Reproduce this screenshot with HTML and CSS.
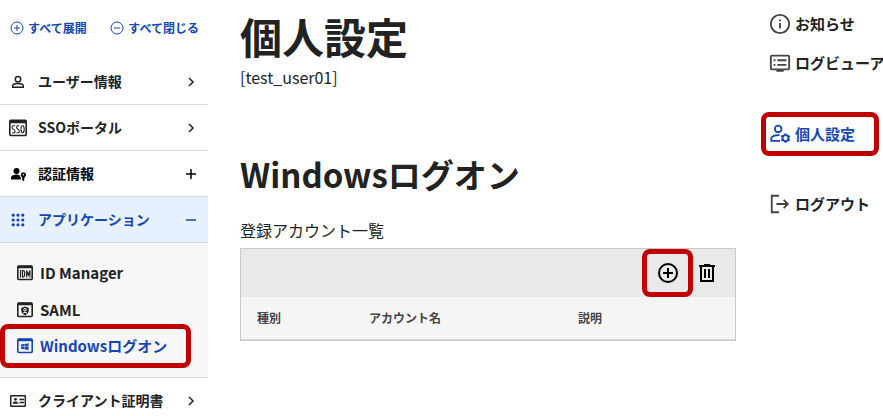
FILE: index.html
```html
<!DOCTYPE html>
<html lang="ja">
<head>
    <meta charset="UTF-8">
    <meta name="viewport" content="width=device-width, initial-scale=1.0">
    <title>個人設定</title>
    <link rel="stylesheet" href="styles.css">
</head>
<body>
    <!-- Left Menu -->
    <nav class="sidebar">
        <div class="toggle-bar">
            <button type="button">
                <svg width="14" height="14" viewBox="0 0 14 14" fill="none" stroke="currentColor"><circle cx="7" cy="7" r="6"/><path d="M4 7h6M7 4v6"/></svg>
                すべて展開
            </button>
            <button type="button">
                <svg width="14" height="14" viewBox="0 0 14 14" fill="none" stroke="currentColor"><circle cx="7" cy="7" r="6"/><path d="M4 7h6"/></svg>
                すべて閉じる
            </button>
        </div>
        <ul class="menu">
            <li>
                <a class="menu-item" href="#">
                    <svg class="icon" viewBox="0 0 20 20" fill="none" stroke="currentColor" stroke-width="1.5"><circle cx="10" cy="7.3" r="2.7"/><path d="M4.7 15.3v-1.2c0-1.7 3-2.5 5.3-2.5s5.3.8 5.3 2.5v1.2z"/></svg>
                    <span>ユーザー情報</span>
                    <svg class="mark" viewBox="0 0 12 12"><path d="M4 2l4 4-4 4"/></svg>
                </a>
            </li>
            <li>
                <a class="menu-item" href="#">
                    <svg class="icon" viewBox="0 0 20 20" fill="none" stroke="currentColor"><rect x="1.8" y="2.3" width="16.4" height="15.2" rx="1" stroke-width="1.6"/><path d="M2 4h16" stroke-width="2.5"/><path d="M7 7.7H5.2Q4 7.7 4 9.2T5.4 11.200 7 13.200 5.6 14.700H4M11.3 7.700H9.7Q8.6 7.700 8.6 9.200T10 11.200t1.4 2T10 14.700H8.5" stroke-width="1.1"/><ellipse cx="14.6" cy="11.2" rx="1.6" ry="3.500" stroke-width="1.1"/></svg>
                    <span>SSOポータル</span>
                    <svg class="mark" viewBox="0 0 12 12"><path d="M4 2l4 4-4 4"/></svg>
                </a>
            </li>
            <li>
                <a class="menu-item strong" href="#">
                    <svg class="icon" viewBox="0 0 20 20" fill="currentColor"><circle cx="8.5" cy="7" r="3"/><path d="M3 15.5V13.7c0-2 3.2-3.2 5.8-3.2l2.6.4c.2 1.3.8 2 1.4 2.4v2.2z"/><path fill-rule="evenodd" d="M15.4 8.2a2.7 2.7 0 0 1 1.2 5.1v1l-.7.8.7.8-1.2 1.3-1.2-1.2v-2.7a2.7 2.7 0 0 1 1.2-5.1zm0 1.7a.8.8 0 1 0 0 1.6.8.8 0 0 0 0-1.6z"/></svg>
                    <span>認証情報</span>
                    <svg class="mark" viewBox="0 0 12 12"><path d="M1 6h10M6 1v10"/></svg>
                </a>
            </li>
            <li>
                <a class="menu-item active" href="#">
                    <svg class="icon" viewBox="0 0 20 20" fill="none" stroke="currentColor" stroke-width="3.2" stroke-linecap="round" stroke-dasharray="0 4.8"><path d="M5.200 5.200h10M5.200 10h10M5.200 14.800h10"/></svg>
                    <span>アプリケーション</span>
                    <svg class="mark" viewBox="0 0 12 12"><path d="M1 6h10"/></svg>
                </a>
                <ul class="submenu">
                    <li>
                        <a href="#">
                            <svg width="18" height="18" viewBox="0 0 18 18" fill="none" stroke="currentColor"><rect x="1.8" y="2" width="14.4" height="13.5" rx="1" stroke-width="1.6"/><path d="M2 3h14" stroke-width="2.5"/><path d="M4.5 6v7.500M6.5 6.500v6.500h.8q1.4 0 1.4-3.200T7.300 6.500zM10.700 13.500V6.500l1.600 4.500 1.600-4.500v7" stroke-width="1.2"/></svg>
                            ID Manager
                        </a>
                    </li>
                    <li>
                        <a href="#">
                            <svg width="18" height="18" viewBox="0 0 18 18" fill="none" stroke="currentColor"><rect x="1.8" y="2" width="14.4" height="13.5" rx="1" stroke-width="1.6"/><path d="M2 3h14" stroke-width="2.5"/><path d="M9 5.500l3.800 1.400v2.600c0 2.200-1.600 3.800-3.800 4.700-2.200-.9-3.800-2.500-3.800-4.700V6.900z" fill="currentColor" stroke="none"/><circle cx="9" cy="8.800" r="1.3" stroke="#f7f7f7"/><path d="M7 12q2-1.500 4 0" stroke="#f7f7f7"/></svg>
                            SAML
                        </a>
                    </li>
                    <li>
                        <a class="current marked" href="#">
                            <svg width="18" height="18" viewBox="0 0 18 18" fill="none" stroke="currentColor"><rect x="1.8" y="2" width="14.4" height="13.5" rx="1" stroke-width="1.6"/><path d="M2 3h14" stroke-width="2.5"/><path d="M5 7.500l3-.5v2.300H5zM8.400 6.900l4.200-.7v3.100H8.400zM5 9.700h3v2.500l-3-.5zM8.400 9.700h4.200V13l-4.200-.7z" fill="currentColor" stroke="none"/></svg>
                            Windowsログオン
                        </a>
                    </li>
                </ul>
            </li>
            <li>
                <a class="menu-item" href="#">
                    <svg class="icon" viewBox="0 0 20 20" fill="none" stroke="currentColor"><rect x="2.7" y="4.700" width="14.6" height="10.6" rx=".5" stroke-width="1.5"/><path d="M11.5 8.500H16M11.5 11.500H16" stroke-width="1.3"/><circle cx="7.500" cy="8.300" r="1.4" fill="currentColor" stroke="none"/><path d="M4.700 12.800v-.7c0-1.100 1.700-1.700 2.800-1.700s2.800.6 2.800 1.700v.7z" fill="currentColor" stroke="none"/></svg>
                    <span>クライアント証明書</span>
                    <svg class="mark" viewBox="0 0 12 12"><path d="M4 2l4 4-4 4"/></svg>
                </a>
            </li>
        </ul>
    </nav>

    <!-- Main Section -->
    <main class="content">
        <h1>個人設定</h1>
        <p class="user">[test_user01]</p>
        <h2>Windowsログオン</h2>
        <p class="list-title" id="accountTitle">登録アカウント一覧</p>
        <div class="account-list">
            <div class="toolbar">
                <button type="button" class="marked" aria-label="追加">
                    <svg width="24" height="24" viewBox="0 0 24 24" fill="none" stroke="currentColor" stroke-width="2"><circle cx="12" cy="12" r="9"/><path d="M7 12h10M12 7v10"/></svg>
                </button>
                <button type="button" aria-label="削除">
                    <svg width="24" height="24" viewBox="0 0 24 24" fill="none" stroke="currentColor" stroke-width="2"><path d="M4 5h16M9 4h6M6 5v15h12V5M10 8v9M14 8v9"/></svg>
                </button>
            </div>
            <table aria-labelledby="accountTitle">
                <thead>
                    <tr>
                        <th scope="col" class="col-type">種別</th>
                        <th scope="col" class="col-name">アカウント名</th>
                        <th scope="col">説明</th>
                    </tr>
                </thead>
            </table>
        </div>
    </main>

    <!-- Right Menu -->
    <nav class="side-links">
        <a href="#">
            <svg viewBox="0 0 24 24" fill="none" stroke="currentColor" stroke-width="2"><circle cx="12" cy="12" r="10"/><path d="M12 11v6M12 7v2"/></svg>
            お知らせ
        </a>
        <a href="#">
            <svg viewBox="0 0 24 24" fill="none" stroke="currentColor" stroke-width="2"><rect x="2" y="4" width="20" height="15" rx="1"/><path d="M8 20.500h8M9 9h10M9 14h10M5 9h2M5 14h2"/></svg>
            ログビューア
        </a>
        <a class="current marked" href="#">
            <svg viewBox="0 0 24 24" fill="none" stroke="currentColor" stroke-width="2"><circle cx="10" cy="6.500" r="3.600"/><path d="M12 19.500H2.500v-2.500c0-2.500 4-4 9-3.800"/><circle cx="18" cy="16.500" r="3.200"/><path d="M18 11.500v2M18 19.500v2M13.500 13.900l1.700 1M20.800 18.100l1.700 1M13.500 19.100l1.700-1M20.800 14.900l1.700-1" stroke-width="2.500"/></svg>
            個人設定
        </a>
        <a class="logout" href="#">
            <svg viewBox="0 0 24 24" fill="none" stroke="currentColor" stroke-width="2"><path d="M11 3H3v18h8M8 12h12M16 7.500l4.500 4.500-4.500 4.500"/></svg>
            ログアウト
        </a>
    </nav>
</body>
</html>
```
FILE: styles.css
```css
/* Basic Reset */
* {
    box-sizing: border-box;
    margin: 0;
    padding: 0;
}
body {
    display: grid;
    grid-template-columns: 208px 1fr 122px;
    height: 100vh;
    overflow: hidden;
    background-color: #fff;
    color: #222;
    font-family: "Noto Sans CJK JP", sans-serif;
    font-size: 14px;
    line-height: 20px;
}
a {
    color: inherit;
    text-decoration: none;
}
ul {
    list-style: none;
}
button {
    border: 0;
    background: none;
    color: inherit;
    font: inherit;
    cursor: pointer;
}
svg {
    flex: none;
}
/* Red frame */
.marked {
    position: relative;
}
.marked::after {
    content: "";
    position: absolute;
    inset: 0;
    border: 5px solid #c00000;
    border-radius: 8px;
}
/* Left Menu */
.toggle-bar {
    display: flex;
    justify-content: space-between;
    height: 59px;
    padding: 0 9px 4px 10px;
    color: #1446b4;
    font-size: 12px;
    font-weight: 700;
}
.toggle-bar button {
    display: flex;
    align-items: center;
    gap: 4px;
}
.menu-item {
    display: flex;
    align-items: center;
    gap: 10px;
    height: 46px;
    padding: 0 11px 0 8px;
    border-bottom: 1px solid #d9d9d9;
    font-weight: 700;
}
.menu-item span {
    flex: 1;
    padding-bottom: 2px;
}
.menu-item .icon {
    width: 20px;
    height: 20px;
}
.menu-item .mark {
    width: 12px;
    height: 12px;
    fill: none;
    stroke: currentColor;
    stroke-width: 1.5;
}
.menu-item.strong {
    color: #000;
}
.menu-item.active {
    background-color: #e6f0fe;
    color: #1446b4;
}
.submenu {
    padding: 11px 0 9px;
    border-bottom: 1px solid #d9d9d9;
    background-color: #f7f7f7;
}
.submenu a {
    display: flex;
    align-items: center;
    gap: 6px;
    height: 37px;
    padding-left: 16px;
    font-weight: 700;
    font-size: 15px;
}
.submenu a.marked {
    height: 44px;
    margin: -4px 17px 0 0;
}
.current {
    color: #1446b4;
}
/* Main Section */
.content {
    padding: 6px 25px 0 32px;
}
h1 {
    font-size: 42px;
    line-height: 60px;
}
.user {
    font-size: 16px;
    line-height: 22px;
}
h2 {
    margin-top: 62px;
    font-size: 33px;
    line-height: 48px;
}
.list-title {
    margin-top: 20px;
    font-size: 16px;
    line-height: 24px;
}
.account-list {
    margin-top: 6px;
    border: 1px solid #c8c8c8;
    background-color: #f5f5f5;
}
.toolbar {
    display: flex;
    justify-content: flex-end;
    height: 48px;
    padding-right: 14px;
    background-color: #e9e9e9;
    color: #000;
}
.toolbar button {
    display: flex;
    align-items: center;
    justify-content: center;
    width: 28px;
}
.toolbar .marked {
    width: 51px;
}
table {
    width: 100%;
    border-collapse: collapse;
    table-layout: fixed;
}
th {
    height: 42px;
    padding-left: 16px;
    border-bottom: 1px solid #d9d9d9;
    color: #444;
    font-size: 12px;
    font-weight: 700;
    text-align: left;
}
.col-type {
    width: 112px;
}
.col-name {
    width: 209px;
}
/* Right Menu */
.side-links {
    padding-top: 4px;
    font-size: 15px;
    font-weight: 700;
    white-space: nowrap;
}
.side-links a {
    display: flex;
    align-items: center;
    gap: 4px;
    height: 39px;
    padding-left: 8px;
}
.side-links svg {
    width: 22px;
    height: 22px;
    color: #444;
}
.side-links .current svg {
    color: #1446b4;
}
.side-links a.marked {
    height: 44px;
    margin: 30px 4px 0 0;
}
.side-links .logout {
    margin-top: 28px;
}
```
